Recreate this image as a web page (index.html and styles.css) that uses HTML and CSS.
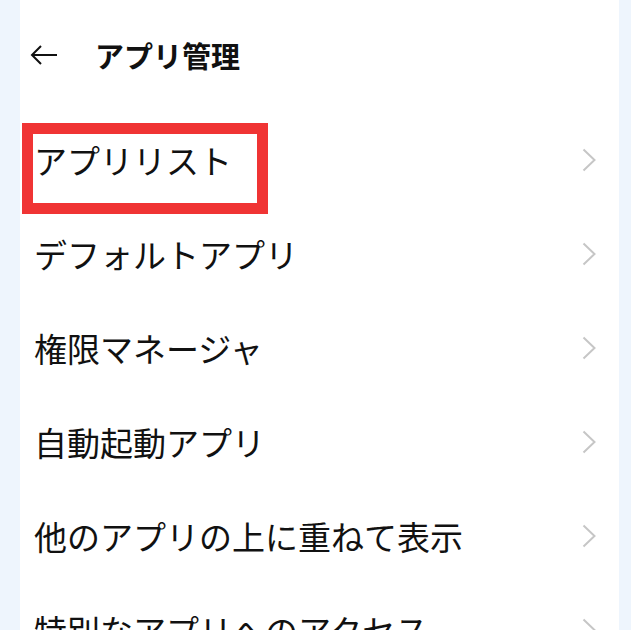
FILE: index.html
```html
<!DOCTYPE html>
<html lang="ja">
<head>
  <meta charset="UTF-8" />
  <meta name="viewport" content="width=device-width, initial-scale=1.0"/>
  <title>アプリ管理</title>
  <link rel="stylesheet" href="styles.css">
</head>
<body>
  <div class="panel">
    <div class="header">
      <svg class="back" width="28" height="22" viewBox="0 0 28 22">
        <path d="M27 11H2M11 2L2 11l9 9" fill="none" stroke="#111" stroke-width="2"/>
      </svg>
      <h1>アプリ管理</h1>
    </div>

    <ul class="menu">
      <li><span class="label marked">アプリリスト</span><svg class="chev" width="14" height="24" viewBox="0 0 14 24"><path d="M1.5 1.5l11 10.5-11 10.5"/></svg></li>
      <li><span class="label">デフォルトアプリ</span><svg class="chev" width="14" height="24" viewBox="0 0 14 24"><path d="M1.5 1.5l11 10.5-11 10.5"/></svg></li>
      <li><span class="label">権限マネージャ</span><svg class="chev" width="14" height="24" viewBox="0 0 14 24"><path d="M1.5 1.5l11 10.5-11 10.5"/></svg></li>
      <li><span class="label">自動起動アプリ</span><svg class="chev" width="14" height="24" viewBox="0 0 14 24"><path d="M1.5 1.5l11 10.5-11 10.5"/></svg></li>
      <li><span class="label">他のアプリの上に重ねて表示</span><svg class="chev" width="14" height="24" viewBox="0 0 14 24"><path d="M1.5 1.5l11 10.5-11 10.5"/></svg></li>
      <li><span class="label">特別なアプリへのアクセス</span><svg class="chev" width="14" height="24" viewBox="0 0 14 24"><path d="M1.5 1.5l11 10.5-11 10.5"/></svg></li>
    </ul>
  </div>
</body>
</html>
```

FILE: styles.css
```css
body {
  margin: 0;
  background: #eef5fd;
  font-family: "Noto Sans CJK JP", "Noto Sans", sans-serif;
  color: #111;
  height: 630px;
  overflow: hidden;
}

.panel {
  margin: 0 12px 0 20px;
  background: #fff;
  height: 630px;
}

.header {
  height: 110px;
  display: flex;
  align-items: center;
  padding-left: 10px;
}

.back {
  display: block;
  margin-right: 37px;
}

h1 {
  margin: 0;
  font-size: 29px;
  font-weight: 700;
  line-height: 1;
}

.menu {
  list-style: none;
  margin: 0;
  padding: 3px 0 0;
}

.menu li {
  height: 94px;
  display: flex;
  align-items: center;
  justify-content: space-between;
  padding: 0 23px 0 14px;
}

.label {
  font-size: 33px;
  line-height: 1;
  position: relative;
}

.marked::after {
  content: "";
  position: absolute;
  left: -12px;
  top: -21px;
  width: 224px;
  height: 69px;
  border: 11px solid #f03434;
}

.chev {
  display: block;
  fill: none;
  stroke: #c6c6c6;
  stroke-width: 2;
}
```
